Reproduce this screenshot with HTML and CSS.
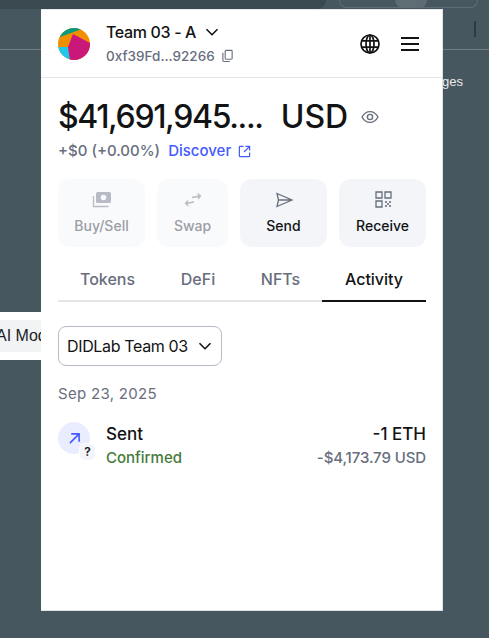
FILE: index.html
```html
<!DOCTYPE html>
<html lang="en">
<head>
    <meta charset="UTF-8">
    <meta name="viewport" content="width=device-width, initial-scale=1.0">
    <title>Wallet</title>
    <link rel="stylesheet" href="styles.css">
</head>
<body>
    <!-- Browser page behind the popup -->
    <div class="backdrop">
        <div class="top-strip">
            <div class="address-bar"></div>
            <div class="search-pill"><span class="pill-knob"></span></div>
        </div>
        <div class="toolbar"><span class="toolbar-sep"></span></div>
        <div class="page-link">Images</div>
        <div class="side-tab"><span>AI Mode</span></div>
    </div>

    <!-- Wallet popup -->
    <div class="wallet">
        <header class="wallet-header">
            <svg class="avatar" viewBox="0 0 32 32">
                <defs><clipPath id="avatar-clip"><circle cx="16" cy="16" r="16"/></clipPath></defs>
                <g clip-path="url(#avatar-clip)">
                    <rect width="32" height="32" fill="#f18f01"/>
                    <polygon points="0,0 27,0 24,1 2,9 0,10" fill="#0a9a80"/>
                    <polygon points="0,19 10,19 12,32 0,32" fill="#22c7ec"/>
                    <polygon points="15,6 32,15 32,32 12,32 10,19" fill="#c9187a"/>
                </g>
            </svg>
            <div class="account">
                <div class="account-name">
                    <span>Team 03 - A</span>
                    <svg class="chevron" viewBox="0 0 16 16"><path d="M2.5 5.2 8 10.7l5.5-5.5"/></svg>
                </div>
                <div class="account-address">
                    <span>0xf39Fd...92266</span>
                    <svg class="copy-icon" viewBox="0 0 14 14"><rect x="4.5" y="1" width="7.5" height="9.5" rx="1"/><path d="M2 3.500v8.200c0 .7.500 1.200 1.200 1.200h6.300"/></svg>
                </div>
            </div>
            <div class="header-actions">
                <svg class="globe-icon" viewBox="0 0 20 20">
                    <circle cx="10" cy="10" r="9"/>
                    <ellipse cx="10" cy="10" rx="4" ry="9"/>
                    <path d="M10 1v18M1.800 6.800h16.400M1.800 13.200h16.400"/>
                </svg>
                <div class="menu-icon"><span></span><span></span><span></span></div>
            </div>
        </header>

        <div class="wallet-body">
            <div class="balance">
                <span class="balance-value">$41,691,945....</span>
                <span class="balance-unit">USD</span>
                <svg class="eye-icon" viewBox="0 0 18 14"><path d="M1 7c2-3.600 4.700-5.400 8-5.400S15 3.400 17 7c-2 3.600-4.700 5.400-8 5.400S3 10.600 1 7z"/><circle cx="9" cy="7" r="2.600"/></svg>
            </div>
            <div class="change">
                <span class="change-value">+$0 (+0.00%)</span>
                <a class="discover">Discover
                    <svg class="external-icon" viewBox="0 0 14 14"><path d="M6 1.500H2.200c-.4 0-.7.300-.7.700v9.600c0 .4.300.7.700.7h9.600c.4 0 .7-.3.700-.7V8M8 1.500h4.500V6M12.300 1.700 6.500 7.500"/></svg>
                </a>
            </div>

            <div class="actions">
                <div class="action action-buy disabled">
                    <svg viewBox="0 0 20 18"><rect x="4" y="1" width="15" height="11" rx="1.500" class="solid"/><circle cx="11.500" cy="6.500" r="2.800" class="hole"/><path d="M1.500 5v10.500h15" class="line"/></svg>
                    <span>Buy/Sell</span>
                </div>
                <div class="action action-swap disabled">
                    <svg viewBox="0 0 20 18"><path d="M9 6.500l8-1.500M14.500 2.500l3 2.500-2.500 3M11 11l-8 1.500M5 9.500l-2.500 3 3 2.500" class="line"/></svg>
                    <span>Swap</span>
                </div>
                <div class="action action-send">
                    <svg viewBox="0 0 20 18"><path d="M3 2.500 18 9 3 15.500 4.500 9zM4.500 9H18" class="line"/></svg>
                    <span>Send</span>
                </div>
                <div class="action action-receive">
                    <svg viewBox="0 0 20 18">
                        <path d="M3 1h6v6H3zM12 1h6v6h-6zM3 10h6v6H3z" class="line"/>
                        <path d="M12 10h2v2h-2zM16 10h2v2h-2zM14 12h2v2h-2zM12 14h2v2h-2zM16 14h2v2h-2z" class="dots"/>
                    </svg>
                    <span>Receive</span>
                </div>
            </div>

            <nav class="tabs">
                <div class="tab">Tokens</div>
                <div class="tab">DeFi</div>
                <div class="tab">NFTs</div>
                <div class="tab active">Activity</div>
            </nav>

            <button class="network-select">
                <span>DIDLab Team 03</span>
                <svg class="chevron" viewBox="0 0 16 16"><path d="M2.5 5.2 8 10.7l5.5-5.5"/></svg>
            </button>

            <div class="date">Sep 23, 2025</div>

            <div class="tx">
                <div class="tx-icon">
                    <svg viewBox="0 0 14 14"><path d="M2 12 12 2M3.500 2H12v8.500"/></svg>
                    <span class="tx-badge">?</span>
                </div>
                <div class="tx-info">
                    <div class="tx-title">Sent</div>
                    <div class="tx-status">Confirmed</div>
                </div>
                <div class="tx-amount">
                    <div class="tx-title">-1 ETH</div>
                    <div class="tx-fiat">-$4,173.79 USD</div>
                </div>
            </div>
        </div>
    </div>
</body>
</html>
```

FILE: styles.css
```css
* {
    margin: 0;
    padding: 0;
    box-sizing: border-box;
}

body {
    width: 489px;
    height: 638px;
    overflow: hidden;
    background: #47575f;
    font-family: Inter, "Liberation Sans", sans-serif;
    color: #121314;
    position: relative;
}

/* Page behind the popup */
.backdrop {
    height: 100%;
    display: flex;
    flex-direction: column;
}

.top-strip {
    height: 9px;
    display: flex;
    overflow: hidden;
}

.address-bar {
    width: 326px;
    height: 9px;
    background: #3a4850;
    border-bottom-right-radius: 10px;
}

.search-pill {
    width: 139px;
    height: 8px;
    margin-left: 13px;
    border: 1px solid #5f6e76;
    border-top: none;
    border-radius: 0 0 10px 10px;
    display: flex;
    justify-content: center;
}

.pill-knob {
    width: 32px;
    height: 8px;
    background: #5e6c74;
    border-radius: 0 0 16px 16px;
    margin-left: 4px;
}

.toolbar {
    height: 41px;
    border-bottom: 1px solid #6f7d84;
    display: flex;
    justify-content: flex-end;
}

.toolbar-sep {
    width: 2px;
    height: 16px;
    margin: 12px 13px 0 0;
    background: #2e3b42;
}

.page-link {
    margin-top: 24px;
    padding-right: 26px;
    text-align: right;
    font-family: "Liberation Sans", sans-serif;
    font-size: 13px;
    line-height: 16px;
    color: #e8eaed;
}

.side-tab {
    width: 41px;
    height: 48px;
    margin-top: 222px;
    padding: 8px 0;
    background: #fff;
    overflow: hidden;
}

.side-tab span {
    display: block;
    width: 100%;
    height: 32px;
    background: #f1f3f4;
    white-space: nowrap;
    font-family: "Liberation Sans", sans-serif;
    font-size: 16px;
    line-height: 32px;
    color: #202124;
    text-indent: -4px;
}

/* Popup */
.wallet {
    position: absolute;
    left: 41px;
    top: 9px;
    width: 402px;
    height: 602px;
    background: #fff;
    border: 1px solid #dfe3e8;
    border-top-color: #e6eaee;
    border-left: none;
}

.wallet-header {
    height: 68px;
    padding: 18px 23px 0 17px;
    border-bottom: 1px solid #e4e5e8;
    display: flex;
}

.avatar {
    width: 32px;
    height: 32px;
    flex: none;
}

.account {
    margin-left: 16px;
    flex: 1;
}

.account-name {
    display: flex;
    align-items: center;
    font-size: 16px;
    line-height: 20px;
    font-weight: 500;
    letter-spacing: -0.35px;
    height: 16px;
    margin-top: -4px;
}

.chevron {
    width: 16px;
    height: 16px;
    margin-left: 8px;
    fill: none;
    stroke: #121314;
    stroke-width: 1.6;
}

.account-address {
    display: flex;
    align-items: center;
    margin-top: 6px;
    font-size: 13.5px;
    line-height: 20px;
    font-weight: 500;
    color: #686e7d;
}

.copy-icon {
    width: 13px;
    height: 14px;
    margin-left: 6px;
    fill: none;
    stroke: #686e7d;
    stroke-width: 1.2;
}

.header-actions {
    display: flex;
    align-items: center;
    height: 32px;
    gap: 21px;
}

.globe-icon {
    width: 20px;
    height: 20px;
    fill: none;
    stroke: #121314;
    stroke-width: 1.7;
}

.menu-icon {
    width: 18px;
    display: flex;
    flex-direction: column;
    gap: 4px;
}

.menu-icon span {
    height: 2px;
    background: #121314;
}

.wallet-body {
    padding: 0 16px 0 17px;
}

/* Balance */
.balance {
    display: flex;
    align-items: center;
    height: 36px;
    margin-top: 21px;
    font-size: 32px;
    line-height: 36px;
    font-weight: 500;
}

.balance-value {
    letter-spacing: -1.35px;
}

.balance-unit {
    margin-left: 18px;
}

.eye-icon {
    width: 18px;
    height: 14px;
    margin-left: 13px;
    fill: none;
    stroke: #686e7d;
    stroke-width: 1.4;
}

.change {
    display: flex;
    align-items: center;
    margin-top: 4px;
    font-size: 15px;
    line-height: 24px;
    font-weight: 500;
    color: #686e7d;
}

.discover {
    display: flex;
    align-items: center;
    margin-left: 8px;
    color: #4459ff;
}

.external-icon {
    width: 13px;
    height: 13px;
    margin-left: 7px;
    fill: none;
    stroke: #4459ff;
    stroke-width: 1.3;
}

/* Action buttons */
.actions {
    display: flex;
    gap: 12px;
    margin-top: 16px;
}

.action {
    width: 87px;
    height: 68px;
    border-radius: 12px;
    background: #f3f5f9;
    display: flex;
    flex-direction: column;
    align-items: center;
    padding-top: 12px;
    font-size: 14px;
    line-height: 20px;
    font-weight: 500;
}

.action svg {
    width: 20px;
    height: 18px;
    margin-bottom: 7px;
}

.action.disabled {
    background: #f9fafc;
    color: #9b9ea5;
}

.action-swap {
    width: 71px;
}

.line {
    fill: none;
    stroke: #686e7d;
    stroke-width: 1.3;
}

.dots {
    fill: #686e7d;
    opacity: 0.8;
}

.solid {
    fill: #b8bbc3;
}

.hole {
    fill: #f9fafc;
}

.disabled .line {
    stroke: #b8bbc3;
}

/* Tabs */
.tabs {
    display: grid;
    grid-template-columns: 99px 82px 83px 104px;
    margin-top: 10px;
    border-bottom: 2px solid #e4e5e8;
    height: 45px;
}

.tab {
    text-align: center;
    font-size: 16px;
    line-height: 44px;
    font-weight: 500;
    color: #686e7d;
}

.tab.active {
    color: #121314;
    height: 45px;
    border-bottom: 2px solid #121314;
}

/* Network filter */
.network-select {
    display: flex;
    align-items: center;
    width: 164px;
    height: 40px;
    margin-top: 24px;
    padding-left: 8px;
    border: 1px solid #b7bbc8;
    border-radius: 8px;
    background: #fff;
    font-family: inherit;
    font-size: 16px;
    font-weight: 400;
    letter-spacing: -0.35px;
    color: #121314;
}

.network-select .chevron {
    margin-left: 9px;
}

.date {
    margin-top: 16px;
    font-size: 15px;
    line-height: 24px;
    font-weight: 400;
    letter-spacing: 0.3px;
    color: #686e7d;
}

/* Transaction row */
.tx {
    display: flex;
    margin-top: 16px;
}

.tx-icon {
    position: relative;
    width: 32px;
    height: 32px;
    border-radius: 50%;
    background: #eaecff;
    display: flex;
    align-items: center;
    justify-content: center;
}

.tx-icon svg {
    width: 13px;
    height: 13px;
    fill: none;
    stroke: #4459ff;
    stroke-width: 1.7;
}

.tx-badge {
    position: absolute;
    right: -6px;
    bottom: -7px;
    width: 17px;
    height: 18px;
    border-radius: 6px;
    background: #f3f5f9;
    border: 1px solid #fff;
    font-size: 12px;
    line-height: 16px;
    font-weight: 600;
    text-align: center;
}

.tx-info {
    margin-left: 16px;
    flex: 1;
}

.tx-title {
    font-size: 17px;
    line-height: 24px;
    font-weight: 500;
}

.tx-status {
    margin-top: 1px;
    font-size: 15px;
    line-height: 22px;
    font-weight: 500;
    color: #457a39;
}

.tx-amount {
    text-align: right;
}

.tx-fiat {
    margin-top: 1px;
    font-size: 15px;
    line-height: 22px;
    font-weight: 500;
    letter-spacing: -0.1px;
    color: #686e7d;
}
```
